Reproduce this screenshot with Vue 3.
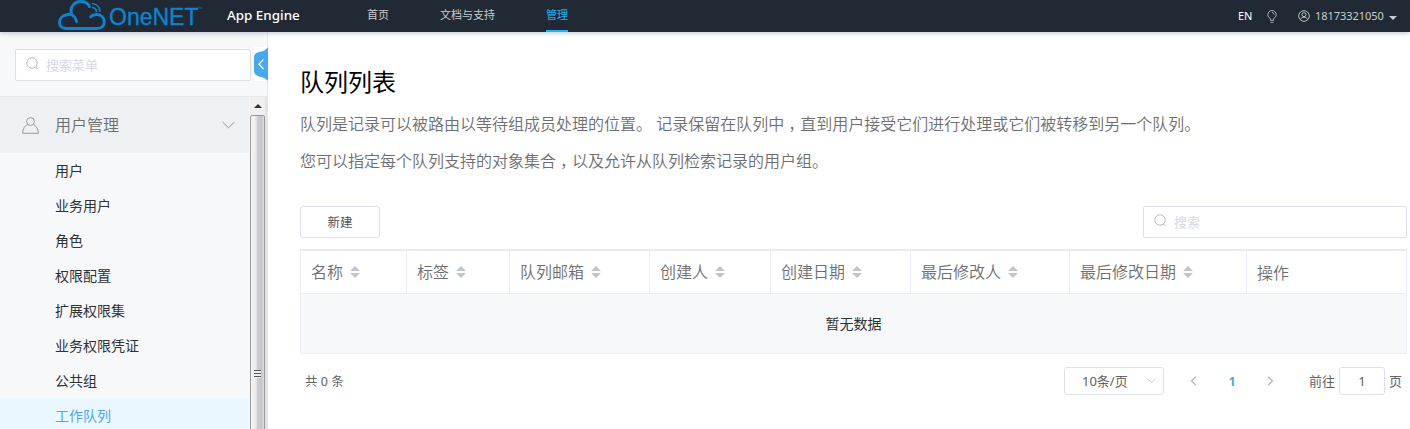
<script setup>
const menu = ['用户', '业务用户', '角色', '权限配置', '扩展权限集', '业务权限凭证', '公共组', '工作队列']
const columns = ['名称', '标签', '队列邮箱', '创建人', '创建日期', '最后修改人', '最后修改日期', '操作']
</script>

<template>
  <div class="page">
    <header class="top">
      <svg class="cloud" viewBox="0 0 48 32" fill="none" stroke="#0a85d1" stroke-linecap="round" stroke-linejoin="round">
        <path d="M18.5 21.5C17.5 16 12.500 12.800 8.300 15C4 15.500 1.500 19 1.500 22.500C1.500 26.500 4.500 28.500 8.500 28.500H39C43.500 28.500 46.200 26 46.200 22C46.200 17.500 43 14.800 39.300 14.500C37.600 14.300 34.500 14.800 32.700 16.800" stroke-width="2.900" />
        <path d="M13.500 14C11.500 7 16.500 1.500 23 1.500C27 1.500 30 3.500 31.500 6.500" stroke-width="2.900" />
        <path d="M34.500 3.500C38.500 4 41.500 7.200 42 11.200M34.500 7.500C37 8 38.200 9.200 38.500 11.500" stroke-width="1.700" />
      </svg>
      <span class="brand">OneNET</span><span class="tm">™</span>
      <span class="product">App Engine</span>
      <nav class="nav">
        <a>首页</a>
        <a>文档与支持</a>
        <a class="active">管理</a>
      </nav>
      <div class="account">
        <span class="lang">EN</span>
        <svg class="bulb" viewBox="0 0 10 13" fill="none" stroke="#a9adb1">
          <path d="M3.300 8.500C2 7.700.8 6.500.8 4.700A4.100 4.100 0 0 1 9.200 4.700C9.200 6.500 8 7.700 6.700 8.500V10.300H3.300ZM3.500 12.300H6.500M5 2.500Q7 2.600 7.200 4.500" />
        </svg>
        <svg class="avatar" viewBox="0 0 12 12" fill="none" stroke="#b9bcc0">
          <circle cx="6" cy="6" r="5.300" /><circle cx="6" cy="4.700" r="2" />
          <path d="M2.500 9.700C3 7.700 4.300 7.300 6 7.300S9 7.700 9.500 9.700" />
        </svg>
        <span class="phone">18173321050</span>
        <i class="caret"></i>
      </div>
    </header>

    <div class="body">
      <aside class="side">
        <div class="side-search">
          <div class="field">
            <svg class="glass" viewBox="0 0 13 13" fill="none" stroke="#b7bcc7"><circle cx="6" cy="6" r="5.200" /><path d="M9.300 9.800L11.800 12.300" /></svg>
            <span>搜索菜单</span>
          </div>
          <div class="fold">
            <svg viewBox="0 0 14 34"><path d="M14 0V34C11 30.500 8 30 5 29.500Q0 28 0 24V10Q0 6 5 5C8 4.500 11 4 14 0Z" fill="#45aaf0" /><path d="M9.500 12.500L5 17.200L9.500 22" fill="none" stroke="#fff" stroke-width="1.200" /></svg>
          </div>
        </div>
        <div class="scroller">
          <div class="tree">
            <div class="group">
              <svg class="person" viewBox="0 0 17 17" fill="none" stroke="#999ca0"><circle cx="8.500" cy="4.500" r="3.900" /><path d="M5.700 7.500C2.500 9 .8 11.700.6 16.300H16.400C16.200 11.700 14.500 9 11.300 7.500" /></svg>
              <span>用户管理</span>
              <svg class="chev" viewBox="0 0 13 8" fill="none" stroke="#8f9296"><path d="M.6 1L6.500 6.800L12.400 1" /></svg>
            </div>
            <div v-for="(m, i) in menu" :key="m" class="item" :class="{ on: i === 7 }">{{ m }}</div>
          </div>
          <div class="bar">
            <div class="arrow"><i></i></div>
            <div class="thumb"><i class="grip"></i></div>
          </div>
        </div>
      </aside>

      <main class="main">
        <h1>队列列表</h1>
        <p>队列是记录可以被路由以等待组成员处理的位置。 记录保留在队列中<span class="comma">，</span>直到用户接受它们进行处理或它们被转移到另一个队列。</p>
        <p>您可以指定每个队列支持的对象集合<span class="comma">，</span>以及允许从队列检索记录的用户组。</p>
        <div class="tools">
          <button>新建</button>
          <div class="field find">
            <svg class="glass" viewBox="0 0 13 13" fill="none" stroke="#b7bcc7"><circle cx="6" cy="6" r="5.200" /><path d="M9.300 9.800L11.800 12.300" /></svg>
            <span>搜索</span>
          </div>
        </div>
        <div class="table">
          <div class="head">
            <div v-for="(c, i) in columns" :key="c" class="cell">
              <span>{{ c }}</span>
              <svg v-if="i < 7" class="sort" viewBox="0 0 10 12" fill="#c0c4cc"><path d="M5 0L10 5H0ZM5 12L10 7H0Z" /></svg>
            </div>
          </div>
          <div class="empty">暂无数据</div>
        </div>
        <div class="pager">
          <span class="total">共 0 条</span>
          <div class="size"><span>10条/页</span><svg viewBox="0 0 9 6" fill="none" stroke="#c0c4cc"><path d="M.5 .7L4.500 4.700L8.500 .7" /></svg></div>
          <svg class="prev" viewBox="0 0 7 10" fill="none" stroke="#b4b8c0" stroke-width="1.300"><path d="M6 .7L1.500 5L6 9.300" /></svg>
          <b>1</b>
          <svg class="next" viewBox="0 0 7 10" fill="none" stroke="#b4b8c0" stroke-width="1.300"><path d="M1 .7L5.500 5L1 9.300" /></svg>
          <span class="go">前往</span>
          <div class="num">1</div>
          <span class="ye">页</span>
        </div>
      </main>
    </div>
  </div>
</template>

<style>
body { margin: 0; overflow: hidden; background: #fff; }
</style>

<style scoped>
* { box-sizing: border-box; }
svg { display: block; flex: none; }
span { white-space: nowrap; }
.page { width: 1410px; height: 429px; overflow: hidden; display: flex; flex-direction: column; font-family: "Noto Sans", "Noto Sans CJK SC", sans-serif; font-size: 14px; color: #303133; }
.top { height: 32px; flex: none; display: flex; align-items: center; background: #212a34; padding-left: 58px; box-shadow: 0 1px 5px rgba(33, 60, 90, .3); position: relative; z-index: 2; color: #c9cccf; font-size: 11px; line-height: 30px; }
.cloud { width: 48px; height: 32px; }
.brand { width: 89px; margin-left: 3px; font: 23px/32px "Liberation Sans", sans-serif; color: #0a85d1; -webkit-text-stroke: .3px #0a85d1; padding-top: 1px; }
.tm { width: 8px; font-size: 6px; line-height: 10px; align-self: flex-start; margin-top: 4px; color: #0a6ca8; }
.product { width: 140px; margin-left: 21px; font-size: 13.4px; font-weight: 500; color: #fff; line-height: 28px; padding-bottom: 2px; }
.nav { display: flex; gap: 51px; height: 32px; }
.nav a { height: 32px; line-height: 30px; white-space: nowrap; }
.nav .active { color: #1eb4fb; border-bottom: 2px solid #1eb4fb; }
.account { margin-left: auto; display: flex; align-items: center; height: 30px; padding-right: 12px; }
.account span { line-height: 30px; }
.lang { color: #fff; width: 29px; }
.bulb { width: 10px; height: 13px; margin-right: 21px; }
.avatar { width: 12px; height: 12px; margin-right: 5px; }
.phone { width: 69px; letter-spacing: -.05px; }
.caret { border: 4px solid transparent; border-top-color: #c9cccf; border-bottom: 0; margin: 3px 1px 0 5px; }
.body { display: flex; flex: 1; min-height: 0; }
.side { width: 268px; flex: none; background: #f7f8fa; display: flex; flex-direction: column; }
.side-search { height: 64px; flex: none; border-right: 1px solid #e4e6e8; display: flex; padding: 17px 0 0 15px; position: relative; }
.field { width: 236px; height: 32px; border: 1px solid #dcdfe6; border-radius: 2px; background: #fff; display: flex; align-items: center; padding: 0 0 2px 10px; color: #d6d9df; font-size: 13px; }
.glass { width: 13px; height: 13px; margin: 0 7px 2px 0; }
.fold { position: absolute; left: 254px; top: 15px; width: 14px; height: 34px; background: #fff; }
.scroller { flex: 1; min-height: 0; border-top: 1px solid #e4e6e8; display: flex; overflow: hidden; }
.tree { width: 250px; flex: none; }
.group { height: 56px; width: 249px; background: #edf1f4; display: flex; align-items: center; padding: 0 14px 0 22px; font-size: 16px; color: #6d6e6f; font-weight: 350; }
.group span { padding-bottom: 2px; }
.person { width: 17px; height: 17px; margin-right: 16px; }
.chev { width: 13px; height: 8px; margin-left: auto; }
.item { width: 249px; height: 35px; line-height: 35px; padding-left: 55px; }
.item.on { background: #ebf7fe; color: #45aaf0; }
.bar { width: 18px; border-right: 3px solid #e4e5e6; background: #f0f0f0; height: 332px; }
.arrow { height: 18px; display: flex; justify-content: center; align-items: center; }
.arrow i { border: 4px solid transparent; border-bottom-color: #333; border-top: 0; }
.thumb { height: 520px; border: 1px solid #999; border-radius: 2px; background: linear-gradient(90deg, #f5f5f5, #e9e9eb 40%, #cdcdd2 48%, #c5c6cc 80%, #ddd); padding: 254px 0 0 3px; }
.grip { display: block; width: 7px; height: 8px; background: repeating-linear-gradient(#555 0 1px, #eee 1px 3px); }
.main { flex: 1; padding: 0 3px 0 32px; }
h1 { margin: 0; height: 72px; padding-top: 30px; font-size: 24px; line-height: 40px; font-weight: 400; color: #000; }
p { margin: 0; padding-top: 1px; height: 37px; line-height: 36px; font-size: 16px; color: #6d6e6f; font-weight: 350; white-space: nowrap; }
.comma { padding: 0 4px; font-family: "Noto Sans CJK SC", sans-serif; font-feature-settings: "halt"; }
.tools { margin-top: 28px; display: flex; justify-content: space-between; }
button { width: 80px; height: 32px; background: #fff; border: 1px solid #dcdfe6; border-radius: 3px; font: inherit; font-size: 12.500px; color: #505256; padding: 0 0 1px; }
.find { width: 264px; }
.table { margin-top: 11px; height: 105px; border: 1px solid #ebeef5; border-top: 2px solid #e9ebf2; }
.head { height: 43px; display: grid; grid-template-columns: 106px 103px 140px 121px 140px 159px 177px 159px; border-bottom: 1px solid #ebeef5; }
.cell { display: flex; align-items: center; padding-left: 10px; border-right: 1px solid #ebeef5; color: #6d6e6f; font-size: 16px; font-weight: 350; }
.cell span { padding-bottom: 2px; }
.cell:last-child span { padding-bottom: 0; }
.cell:last-child { border-right: 0; }
.sort { width: 10px; height: 12px; margin: 0 0 0 7px; }
.empty { height: 59px; line-height: 60px; text-align: center; background: #f7f8fa; }
.pager { margin-top: 13px; height: 28px; line-height: 28px; display: flex; align-items: center; font-size: 13px; color: #606266; padding-left: 5px; }
.total { width: 759px; font-size: 12.500px; padding-top: 1px; }
.size { width: 100px; height: 28px; border: 1px solid #dcdfe6; border-radius: 3px; display: flex; align-items: center; justify-content: space-between; padding: 0 7px 0 17px; }
.size svg { width: 9px; height: 6px; }
.prev { width: 7px; height: 10px; margin-left: 26px; }
b { width: 70px; text-align: center; color: #45aaf0; font-size: 12.500px; padding-top: 1px; }
.next { width: 7px; height: 10px; }
.go { width: 30px; margin-left: 35px; }
.num { width: 46px; height: 28px; border: 1px solid #dcdfe6; border-radius: 3px; text-align: center; line-height: 27px; }
.ye { margin-left: 4px; }
</style>
